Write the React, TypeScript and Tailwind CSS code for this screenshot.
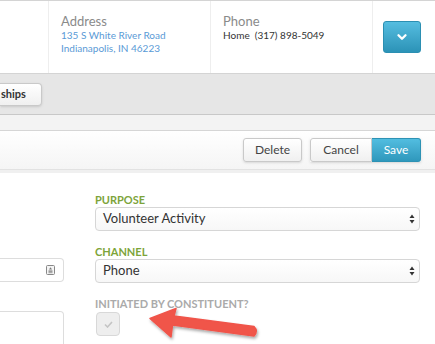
import { ChevronDown } from "lucide-react";

const font = { fontFamily: "Lato, 'Open Sans', Arial, sans-serif" };

const SelectArrows = () => (
  <svg width="6" height="10" viewBox="0 0 6 10" className="shrink-0">
    <path d="M3 0.5 L5.5 4 H0.5 Z" fill="#333" />
    <path d="M3 9.5 L5.5 6 H0.5 Z" fill="#333" />
  </svg>
);

const FakeSelect = ({ value }: { value: string }) => (
  <div className="flex h-[24px] w-[325px] items-center justify-between rounded-[4px] border border-[#d6d6d6] bg-gradient-to-b from-white to-[#f7f7f7] pl-[7px] pr-[4px] text-[13px] text-[#333]">
    <span>{value}</span>
    <SelectArrows />
  </div>
);

const App = () => {
  return (
    <div className="relative h-[344px] w-[435px] overflow-hidden bg-white" style={font}>
      {/* header */}
      <div className="flex h-[74px] border-t border-b border-[#d4d4d4] bg-white">
        <div className="w-[49px] shrink-0 border-r border-[#eeeeee]" />
        <div className="w-[162px] shrink-0 border-r border-[#eeeeee] pl-[12px] pt-[12px]">
          <p className="text-[13px] leading-[16px] text-[#8a8a8a]">Address</p>
          <p className="text-[10px] leading-[13px] text-[#5a9ad6]">135 S White River Road</p>
          <p className="text-[10px] leading-[13px] text-[#5a9ad6]">Indianapolis, IN 46223</p>
        </div>
        <div className="w-[162px] shrink-0 border-r border-[#eeeeee] pl-[12px] pt-[12px]">
          <p className="text-[13px] leading-[16px] text-[#8a8a8a]">Phone</p>
          <p className="text-[10px] leading-[13px] text-[#333]">
            Home&nbsp; (317) 898-5049
          </p>
        </div>
        <div className="flex-1 pl-[10px] pt-[20px]">
          <button className="flex h-[32px] w-[38px] items-center justify-center rounded-[3px] border border-[#2b8fb2] bg-gradient-to-b from-[#55bde0] to-[#2b93b7]">
            <ChevronDown className="h-[14px] w-[14px] text-white" strokeWidth={4} />
          </button>
        </div>
      </div>

      {/* tabs bar */}
      <div className="h-[41px] border-b border-[#c8c8c8] bg-[#e6e6e6] pt-[9px]">
        <div className="flex h-[23px] w-[42px] items-center rounded-r-[4px] border border-l-0 border-[#c9c9c9] bg-gradient-to-b from-white to-[#f0f0f0] pl-[1px] text-[11px] font-bold text-[#333] shadow-sm">
          ships
        </div>
      </div>
      <div className="h-[16px] border-b border-[#d6d6d6] bg-[#f3f3f3]" />

      {/* toolbar */}
      <div className="flex h-[38px] items-center justify-end gap-[8px] bg-gradient-to-b from-white to-[#f5f5f5] pr-[14px]">
        <button className="h-[24px] w-[59px] rounded-[3px] border border-[#c9c9c9] bg-gradient-to-b from-white to-[#f0f0f0] text-[12px] text-[#444] shadow-sm">
          Delete
        </button>
        <div className="flex h-[24px] shadow-sm">
          <button className="w-[62px] rounded-l-[3px] border border-[#c9c9c9] bg-gradient-to-b from-white to-[#f0f0f0] text-[12px] text-[#444]">
            Cancel
          </button>
          <button className="w-[49px] rounded-r-[3px] border border-l-0 border-[#2d92b4] bg-gradient-to-b from-[#52bde0] to-[#2f98bc] text-[12px] text-white">
            Save
          </button>
        </div>
      </div>
      <div className="h-[4px] border-t border-[#e2e2e2] bg-[#f0f0f0]" />

      {/* form */}
      <div className="flex gap-[31px] pt-[20px]">
        <div className="flex w-[64px] shrink-0 flex-col pt-[65px]">
          <div className="flex h-[24px] items-center justify-end rounded-r-[4px] border border-l-0 border-[#dddddd] pr-[8px]">
            <svg width="9" height="10" viewBox="0 0 9 10">
              <rect x="0.5" y="0.5" width="8" height="9" rx="1" fill="#f4f4f4" stroke="#888" />
              <path d="M4.5 2.2 L6 4.5 H3 Z" fill="#777" />
              <rect x="2.5" y="5.5" width="4" height="1.2" fill="#777" />
              <rect x="2.5" y="7.2" width="4" height="1" fill="#999" />
            </svg>
          </div>
          <div className="mt-[29px] h-[60px] rounded-r-[4px] border border-l-0 border-[#dddddd]" />
        </div>

        <div className="flex w-[325px] flex-col">
          <p className="text-[11px] font-bold leading-[13px] text-[#7da43a]">PURPOSE</p>
          <div className="mt-[1px]">
            <FakeSelect value="Volunteer Activity" />
          </div>
          <p className="mt-[14px] text-[11px] font-bold leading-[13px] text-[#7da43a]">CHANNEL</p>
          <div className="mt-[1px]">
            <FakeSelect value="Phone" />
          </div>
          <p className="mt-[14px] text-[11px] font-bold leading-[13px] text-[#aaaaaa]">
            INITIATED BY CONSTITUENT?
          </p>
          <div className="ml-[1px] mt-[2px] flex h-[24px] w-[24px] items-center justify-center rounded-[4px] border border-[#d8d8d8] bg-[#eeeeee]">
            <svg width="9" height="7" viewBox="0 0 9 7">
              <path d="M1 3.5 L3.5 6 L8 1" fill="none" stroke="#c4c4c4" strokeWidth="1.6" />
            </svg>
          </div>
        </div>
      </div>

      {/* annotation arrow */}
      <svg
        className="pointer-events-none absolute left-0 top-0"
        width="435"
        height="344"
        viewBox="0 0 435 344"
      >
        <defs>
          <filter id="sh" x="-20%" y="-50%" width="140%" height="200%">
            <feDropShadow dx="1" dy="2" stdDeviation="1.5" floodColor="#000" floodOpacity="0.35" />
          </filter>
        </defs>
        <g filter="url(#sh)">
          <path
            d="M150 318.5 L176 308.5 L174 316 L254 326.5 Q258.5 331 254 336 L172.5 325 L171 337 Z"
            fill="#f0544a"
            strokeLinejoin="round"
            stroke="#f0544a"
            strokeWidth="1.5"
          />
        </g>
      </svg>
    </div>
  );
};

export default App;
